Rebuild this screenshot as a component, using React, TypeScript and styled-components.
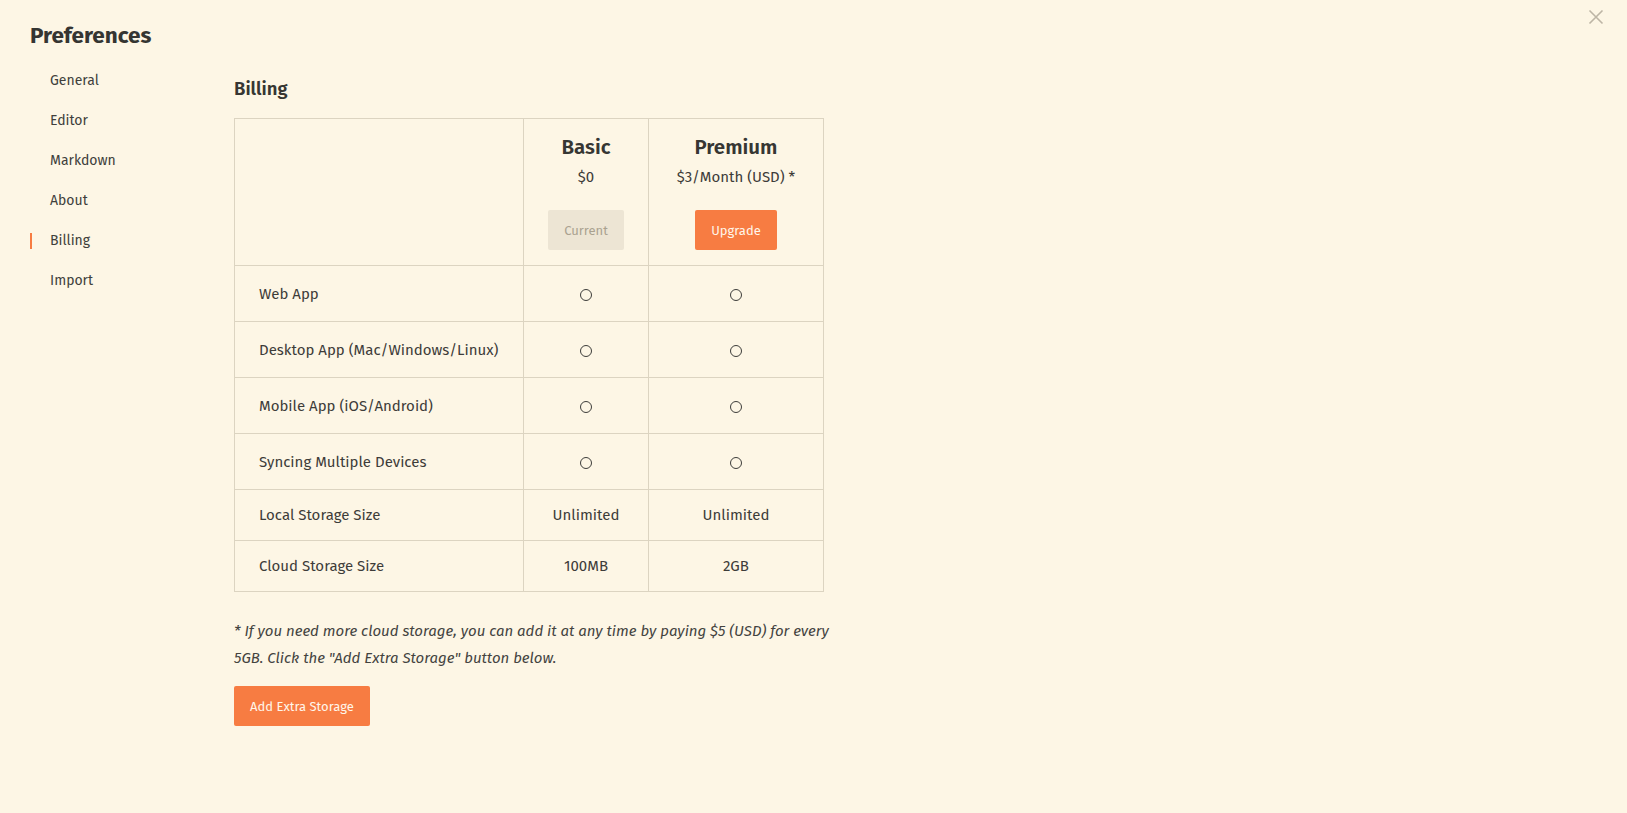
import styled, { createGlobalStyle } from "styled-components";

const GlobalStyle = createGlobalStyle`
	html, body {
		margin: 0;
		padding: 0;
		background: #fdf6e5;
	}
	body {
		font-family: "Fira Sans", Roboto, "Noto Sans", sans-serif;
		font-weight: 400;
		color: #3d3c39;
	}
`;

const ORANGE = "#f77c42";
const BORDER = "#dcd4c1";

const Page = styled.div`
	position: relative;
	min-height: 813px;
	padding: 0 30px;
	box-sizing: border-box;
`;
const Title = styled.h1`
	margin: 0;
	padding-top: 22px;
	font-size: 22.5px;
	line-height: 28px;
	font-weight: 700;
	color: #353532;
	height: 39px;
`;
const Body = styled.div`
	display: flex;
`;
const Sidebar = styled.nav`
	width: 204px;
	flex-shrink: 0;
	display: flex;
	flex-direction: column;
`;
const NavItem = styled.div<{ $active?: boolean }>`
	position: relative;
	height: 40px;
	line-height: 40px;
	padding-left: 20px;
	font-size: 14px;
	color: #403f3c;
	&::before {
		content: "";
		display: ${(p) => (p.$active ? "block" : "none")};
		position: absolute;
		left: 0;
		top: 12px;
		width: 2px;
		height: 16px;
		background: ${ORANGE};
	}
`;
const Main = styled.main`
	padding-top: 17px;
`;
const Heading = styled.h2`
	margin: 0 0 17px;
	font-size: 18.5px;
	line-height: 23px;
	font-weight: 600;
	color: #363633;
`;
const Table = styled.table`
	border-collapse: collapse;
	width: 589px;
	table-layout: fixed;
	font-size: 15px;
	th,
	td {
		border: 1px solid ${BORDER};
	}
`;
const PlanCell = styled.th`
	padding: 14px 0 15px;
	text-align: center;
	vertical-align: top;
	font-weight: 400;
`;
const PlanName = styled.div`
	font-size: 20.5px;
	line-height: 28px;
	font-weight: 600;
	color: #363633;
`;
const PlanPrice = styled.div`
	font-size: 15px;
	line-height: 28px;
	margin: 2px 0 19px;
`;
const Button = styled.button<{ $disabled?: boolean }>`
	font-family: inherit;
	font-weight: 400;
	font-size: 13px;
	height: 40px;
	padding: 0 16px;
	border: none;
	border-radius: 2px;
	cursor: ${(p) => (p.$disabled ? "default" : "pointer")};
	background: ${(p) => (p.$disabled ? "#ede5d4" : ORANGE)};
	color: ${(p) => (p.$disabled ? "#aaa290" : "#fff6ea")};
`;
const Row = styled.tr<{ $tall?: boolean }>`
	height: ${(p) => (p.$tall ? "56px" : "51px")};
`;
const Label = styled.td`
	padding: 0 24px;
	line-height: 24px;
	white-space: nowrap;
`;
const Value = styled.td`
	text-align: center;
	line-height: 24px;
`;
const Dot = styled.span`
	display: inline-block;
	width: 10px;
	height: 10px;
	border: 1.5px solid #3d3d3a;
	border-radius: 50%;
	vertical-align: middle;
`;
const Note = styled.p`
	margin: 26px 0 14px;
	width: 600px;
	font-size: 15px;
	line-height: 27px;
	font-style: italic;
	color: #43433f;
`;
const Close = styled.button`
	position: absolute;
	top: 9px;
	right: 23px;
	background: none;
	border: none;
	padding: 0;
	cursor: pointer;
	svg {
		display: block;
	}
`;

const nav = ["General", "Editor", "Markdown", "About", "Billing", "Import"];

const features = [
	"Web App",
	"Desktop App (Mac/Windows/Linux)",
	"Mobile App (iOS/Android)",
	"Syncing Multiple Devices",
];

const storage = [
	{ label: "Local Storage Size", basic: "Unlimited", premium: "Unlimited" },
	{ label: "Cloud Storage Size", basic: "100MB", premium: "2GB" },
];

export default function App() {
	return (
		<Page>
			<GlobalStyle />
			<Close aria-label="Close">
				<svg width="16" height="16" viewBox="0 0 16 16">
					<path
						d="M1.5 1.5 L14.5 14.5 M14.5 1.5 L1.5 14.5"
						stroke="#bdb5a5"
						strokeWidth="1.6"
					/>
				</svg>
			</Close>
			<Title>Preferences</Title>
			<Body>
				<Sidebar>
					{nav.map((item) => (
						<NavItem key={item} $active={item === "Billing"}>
							{item}
						</NavItem>
					))}
				</Sidebar>
				<Main>
					<Heading>Billing</Heading>
					<Table>
						<colgroup>
							<col style={{ width: 289 }} />
							<col style={{ width: 125 }} />
							<col style={{ width: 175 }} />
						</colgroup>
						<thead>
							<tr>
								<th />
								<PlanCell>
									<PlanName>Basic</PlanName>
									<PlanPrice>$0</PlanPrice>
									<Button $disabled>Current</Button>
								</PlanCell>
								<PlanCell>
									<PlanName>Premium</PlanName>
									<PlanPrice>$3/Month (USD) *</PlanPrice>
									<Button>Upgrade</Button>
								</PlanCell>
							</tr>
						</thead>
						<tbody>
							{features.map((f) => (
								<Row key={f} $tall>
									<Label>{f}</Label>
									<Value>
										<Dot />
									</Value>
									<Value>
										<Dot />
									</Value>
								</Row>
							))}
							{storage.map((s) => (
								<Row key={s.label}>
									<Label>{s.label}</Label>
									<Value>{s.basic}</Value>
									<Value>{s.premium}</Value>
								</Row>
							))}
						</tbody>
					</Table>
					<Note>
						* If you need more cloud storage, you can add it at any
						time by paying $5 (USD) for every 5GB. Click the "Add
						Extra Storage" button below.
					</Note>
					<Button>Add Extra Storage</Button>
				</Main>
			</Body>
		</Page>
	);
}
